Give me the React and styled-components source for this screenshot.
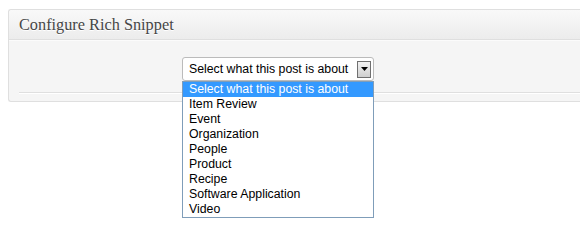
import styled, { createGlobalStyle } from 'styled-components';

const OPTIONS = [
	'Select what this post is about',
	'Item Review',
	'Event',
	'Organization',
	'People',
	'Product',
	'Recipe',
	'Software Application',
	'Video',
];

const Global = createGlobalStyle`
	html, body, #root {
		margin: 0;
		height: 100%;
		background: #fff;
	}
`;

export default function App() {
	return (
		<>
			<Global />
			<Page>
				<Panel>
					<Header>
						<Title>Configure Rich Snippet</Title>
					</Header>
					<Body>
						<SelectWrap>
							<SelectBox>
								<SelectText>{OPTIONS[0]}</SelectText>
								<ArrowButton>
									<svg width="7" height="4" viewBox="0 0 7 4">
										<path d="M0 0h7L3.5 4z" fill="#000" />
									</svg>
								</ArrowButton>
							</SelectBox>
							<List>
								{OPTIONS.map((o, i) => (
									<Option key={o} active={i === 0}>
										{o}
									</Option>
								))}
							</List>
						</SelectWrap>
						<Rule />
					</Body>
				</Panel>
			</Page>
		</>
	);
}

const Page = styled.div`
	box-sizing: border-box;
	height: 100%;
	padding: 9px 0 0 8px;
	overflow: hidden;
`;

const Panel = styled.div`
	border: 1px solid #dfdfdf;
	border-right: none;
	border-radius: 3px 0 0 3px;
	background: #f5f5f5;
`;

const Header = styled.div`
	height: 29px;
	display: flex;
	align-items: center;
	padding-left: 10px;
	background: linear-gradient(to bottom, #f9f9f9, #ececec);
	border-bottom: 1px solid #dfdfdf;
	border-radius: 3px 0 0 0;
`;

const Title = styled.h3`
	margin: 0;
	font-family: 'Liberation Serif', 'DejaVu Serif', serif;
	font-weight: normal;
	font-size: 16.3px;
	color: #464646;
	text-shadow: 0 1px 0 #fff;
`;

const Body = styled.div`
	height: 61px;
	padding: 0 0 0 10px;
	display: flex;
	flex-direction: column;
	box-shadow: 0 1px 0 #fbfbfb inset;
`;

const SelectWrap = styled.div`
	position: relative;
	margin: 17px 0 0 163px;
	width: 192px;
	font-family: 'Liberation Sans', Arial, sans-serif;
	font-size: 12.3px;
	z-index: 2;
`;

const SelectBox = styled.div`
	height: 22px;
	display: flex;
	align-items: center;
	justify-content: space-between;
	background: #fff;
	border: 1px solid #bbb;
	border-radius: 3px;
	padding: 0 2px 0 6px;
	color: #000;
`;

const SelectText = styled.span`
	line-height: 15px;
`;

const ArrowButton = styled.span`
	width: 14px;
	height: 17px;
	display: flex;
	align-items: center;
	justify-content: center;
	box-sizing: border-box;
	border: 1px solid #707070;
	background: linear-gradient(to bottom, #f2f2f2, #cfcfcf);
`;

const List = styled.div`
	position: absolute;
	top: 24px;
	left: 0;
	right: 0;
	background: #fff;
	border: 1px solid #7f9db9;
	box-sizing: border-box;
`;

const Option = styled.div`
	height: 15px;
	line-height: 15px;
	padding-left: 6px;
	color: ${({ active }) => (active ? '#fff' : '#000')};
	background: ${({ active }) => (active ? '#3399ff' : 'transparent')};
`;

const Rule = styled.div`
	margin-top: auto;
	margin-bottom: 8px;
	height: 1px;
	background: #dfdfdf;
	box-shadow: 0 1px 0 #fff;
`;
